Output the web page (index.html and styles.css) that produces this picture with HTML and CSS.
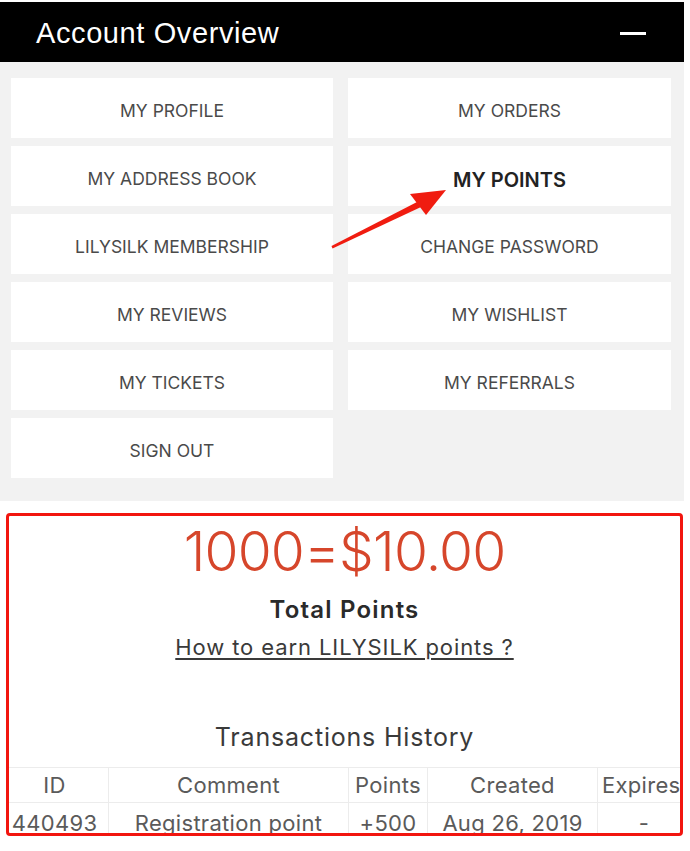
FILE: index.html
```html
<!DOCTYPE html>
<html lang="en">
<head>
<meta charset="utf-8">
<title>Account Overview</title>
<link rel="stylesheet" href="styles.css">
</head>
<body>
<div class="page">
  <header class="acc-header">
    <h1 class="acc-title">Account Overview</h1>
    <span class="collapse" aria-label="collapse"></span>
  </header>

  <nav class="acc-menu">
    <a class="acc-btn">MY PROFILE</a>
    <a class="acc-btn">MY ORDERS</a>
    <a class="acc-btn">MY ADDRESS BOOK</a>
    <a class="acc-btn active">MY POINTS</a>
    <a class="acc-btn">LILYSILK MEMBERSHIP</a>
    <a class="acc-btn">CHANGE PASSWORD</a>
    <a class="acc-btn">MY REVIEWS</a>
    <a class="acc-btn">MY WISHLIST</a>
    <a class="acc-btn">MY TICKETS</a>
    <a class="acc-btn">MY REFERRALS</a>
    <a class="acc-btn">SIGN OUT</a>
  </nav>

  <section class="points">
    <div class="rate">1000=$10.00</div>
    <div class="total">Total Points</div>
    <a class="earn">How to earn LILYSILK points ?</a>
    <h2 class="history">Transactions History</h2>
    <table class="tx">
      <colgroup>
        <col class="c-id"><col class="c-comment"><col class="c-points"><col class="c-created"><col class="c-exp">
      </colgroup>
      <thead>
        <tr><th>ID</th><th>Comment</th><th>Points</th><th>Created</th><th>Expires</th></tr>
      </thead>
      <tbody>
        <tr><td>440493</td><td>Registration point</td><td>+500</td><td>Aug 26, 2019</td><td>-</td></tr>
      </tbody>
    </table>
  </section>

  <svg class="arrow" width="690" height="851" viewBox="0 0 690 851" aria-hidden="true">
    <polygon points="331.5,246 332.5,248.5 421,207 418,201.5" fill="#f01c10"/>
    <polygon points="446,190 410,194 426,215" fill="#f01c10"/>
  </svg>
</div>
</body>
</html>
```

FILE: styles.css
```css
* { box-sizing: border-box; }

html, body {
  margin: 0;
  padding: 0;
  background: #ffffff;
}

body {
  font-family: Inter, "Open Sans", "DejaVu Sans", sans-serif;
  color: #333;
}

.page {
  position: relative;
  width: 690px;
  height: 851px;
  overflow: hidden;
  padding-top: 2px;
}

.acc-header {
  width: 684px;
  height: 60px;
  background: #000;
  display: flex;
  align-items: center;
  justify-content: space-between;
  padding: 0 38px 0 36px;
}

.acc-title {
  margin: 0;
  font-family: "Liberation Sans", Arial, sans-serif;
  font-weight: 400;
  font-size: 29px;
  letter-spacing: 0.6px;
  color: #fff;
  padding-top: 3px;
}

.collapse {
  display: block;
  width: 26px;
  height: 3px;
  background: #fff;
  margin-top: 2px;
}

.acc-menu {
  width: 684px;
  background: #f2f2f2;
  padding: 16px 13px 23px 11px;
  display: grid;
  grid-template-columns: 322px 323px;
  column-gap: 15px;
  row-gap: 8px;
}

.acc-btn {
  height: 60px;
  background: #fff;
  display: flex;
  align-items: center;
  justify-content: center;
  font-size: 17.5px;
  color: #4a4a4a;
  padding-top: 4px;
}

.acc-btn.active {
  font-size: 20px;
  font-weight: 600;
  color: #222;
  padding-top: 8px;
}

.points {
  margin: 12px 0 0 6px;
  width: 677px;
  height: 323px;
  border: 3px solid #f2150f;
  border-radius: 4px;
  overflow: hidden;
  text-align: center;
  padding-top: 5px;
}

.rate {
  font-size: 55px;
  line-height: 60px;
  font-weight: 300;
  color: #d6462b;
  letter-spacing: -0.8px;
}

.total {
  margin-top: 14px;
  font-size: 24px;
  line-height: 30px;
  font-weight: 600;
  color: #2a2a2a;
  letter-spacing: 1.2px;
}

.earn {
  display: inline-block;
  margin-top: 7px;
  font-size: 22px;
  line-height: 30px;
  color: #3a3a3a;
  text-decoration: underline;
  text-underline-offset: 3px;
  letter-spacing: 0.9px;
}

.history {
  margin: 59px 0 0;
  font-size: 25px;
  line-height: 32px;
  font-weight: 400;
  color: #3a3a3a;
  letter-spacing: 0.8px;
}

.tx {
  margin: 14px 0 0 -9px;
  width: 690px;
  border-collapse: collapse;
  table-layout: fixed;
  font-size: 22px;
  color: #5a5a5a;
}

.c-id { width: 108px; }
.c-comment { width: 240px; }
.c-points { width: 79px; }
.c-created { width: 170px; }
.c-exp { width: 93px; }

.tx th,
.tx td {
  border: 1px solid #ececec;
  padding: 0;
  font-weight: 400;
  white-space: nowrap;
  overflow: hidden;
  text-align: center;
  letter-spacing: 0.3px;
}

.tx th { height: 35px; }
.tx td { height: 40px; }

.tx th:last-child { text-align: left; padding-left: 4px; }

.arrow {
  position: absolute;
  left: 0;
  top: 0;
  pointer-events: none;
}
```
